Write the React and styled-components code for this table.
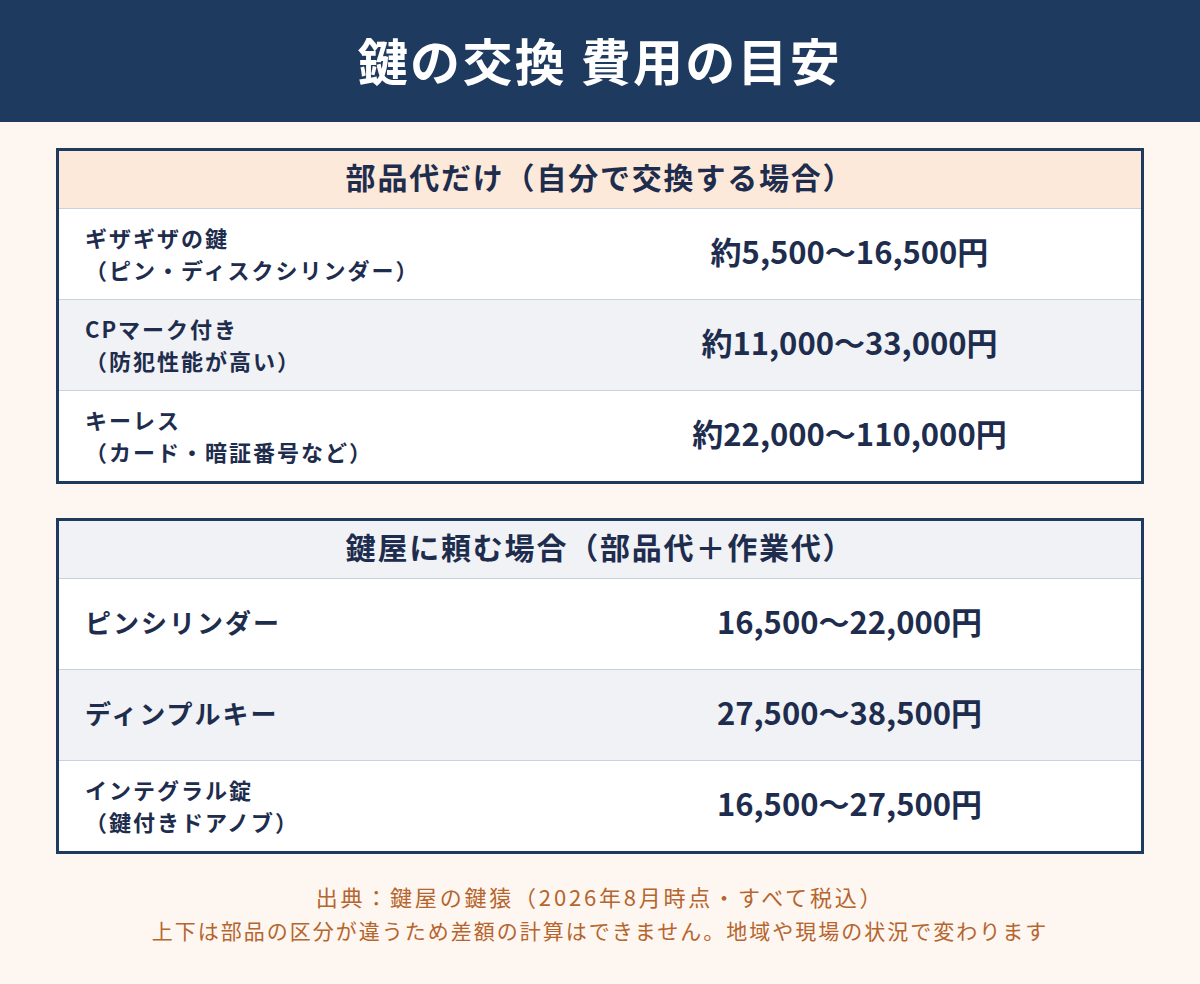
import React from "react";
import styled, { createGlobalStyle } from "styled-components";

const GlobalStyle = createGlobalStyle`
  html, body { margin: 0; padding: 0; }
  body {
    background: #fef6f0;
    font-family: "Noto Sans CJK JP", "Noto Sans", sans-serif;
    color: #1e2d4d;
  }
`;

const Page = styled.div`
  width: 1200px;
  min-height: 984px;
  background: #fef6f0;
  display: flex;
  flex-direction: column;
`;

const Header = styled.header`
  height: 122px;
  box-sizing: border-box;
  padding-bottom: 4px;
  background: #1f3a5f;
  display: flex;
  align-items: center;
  justify-content: center;
`;

const Title = styled.h1`
  margin: 0;
  color: #ffffff;
  font-size: 50px;
  font-weight: 700;
  letter-spacing: 2.3px;
  line-height: 1;
`;

const Main = styled.main`
  padding: 26px 56px 0;
  display: flex;
  flex-direction: column;
  gap: 34px;
`;

const Table = styled.section`
  border: 3px solid #1f3a5f;
  background: #ffffff;
  display: flex;
  flex-direction: column;
`;

const TableHead = styled.div`
  height: 57px;
  box-sizing: border-box;
  padding-bottom: 7px;
  background: ${(p) => p.$bg};
  display: flex;
  align-items: center;
  justify-content: center;
  font-size: 30px;
  font-weight: 700;
  letter-spacing: 1.8px;
  line-height: 1;
  color: #1e2d4d;
`;

const Row = styled.div`
  height: 90px;
  border-top: 1px solid #c9d1dc;
  background: ${(p) => (p.$alt ? "#f0f2f5" : "#ffffff")};
  display: grid;
  grid-template-columns: 499px 1fr;
  align-items: center;
`;

const Label = styled.div`
  padding-left: 26px;
  padding-bottom: ${(p) => (p.$big ? "4px" : "2px")};
  font-size: ${(p) => (p.$big ? "26px" : "22px")};
  font-weight: 700;
  letter-spacing: 2px;
  line-height: 32px;
  color: #1e2d4d;
`;

const LabelLine = styled.div`
  white-space: nowrap;
`;

const Price = styled.div`
  padding-bottom: 7px;
  text-align: center;
  font-size: 31px;
  font-weight: 700;
  line-height: 1;
  color: #1e2d4d;
  white-space: nowrap;
`;

const Footer = styled.footer`
  margin-top: 25px;
  display: flex;
  flex-direction: column;
  align-items: center;
  color: #b5652e;
`;

const Source = styled.p`
  margin: 0;
  font-size: 22px;
  letter-spacing: 2.8px;
  line-height: 34px;
`;

const Note = styled.p`
  margin: 0;
  font-size: 21px;
  letter-spacing: 2px;
  line-height: 34px;
`;

const diy = [
  { label: ["ギザギザの鍵", "（ピン・ディスクシリンダー）"], price: "約5,500〜16,500円" },
  { label: ["CPマーク付き", "（防犯性能が高い）"], price: "約11,000〜33,000円" },
  { label: ["キーレス", "（カード・暗証番号など）"], price: "約22,000〜110,000円" },
];

const pro = [
  { label: ["ピンシリンダー"], price: "16,500〜22,000円" },
  { label: ["ディンプルキー"], price: "27,500〜38,500円" },
  { label: ["インテグラル錠", "（鍵付きドアノブ）"], price: "16,500〜27,500円" },
];

function PriceTable({ title, bg, rows }) {
  return (
    <Table>
      <TableHead $bg={bg}>{title}</TableHead>
      {rows.map((r, i) => (
        <Row key={i} $alt={i === 1}>
          <Label $big={r.label.length === 1}>
            {r.label.map((l, j) => (
              <LabelLine key={j}>{l}</LabelLine>
            ))}
          </Label>
          <Price>{r.price}</Price>
        </Row>
      ))}
    </Table>
  );
}

export default function App() {
  return (
    <Page>
      <GlobalStyle />
      <Header>
        <Title>鍵の交換 費用の目安</Title>
      </Header>
      <Main>
        <PriceTable title="部品代だけ（自分で交換する場合）" bg="#fde9d9" rows={diy} />
        <PriceTable title="鍵屋に頼む場合（部品代＋作業代）" bg="#f0f2f5" rows={pro} />
      </Main>
      <Footer>
        <Source>出典：鍵屋の鍵猿（2026年8月時点・すべて税込）</Source>
        <Note>上下は部品の区分が違うため差額の計算はできません。地域や現場の状況で変わります</Note>
      </Footer>
    </Page>
  );
}
